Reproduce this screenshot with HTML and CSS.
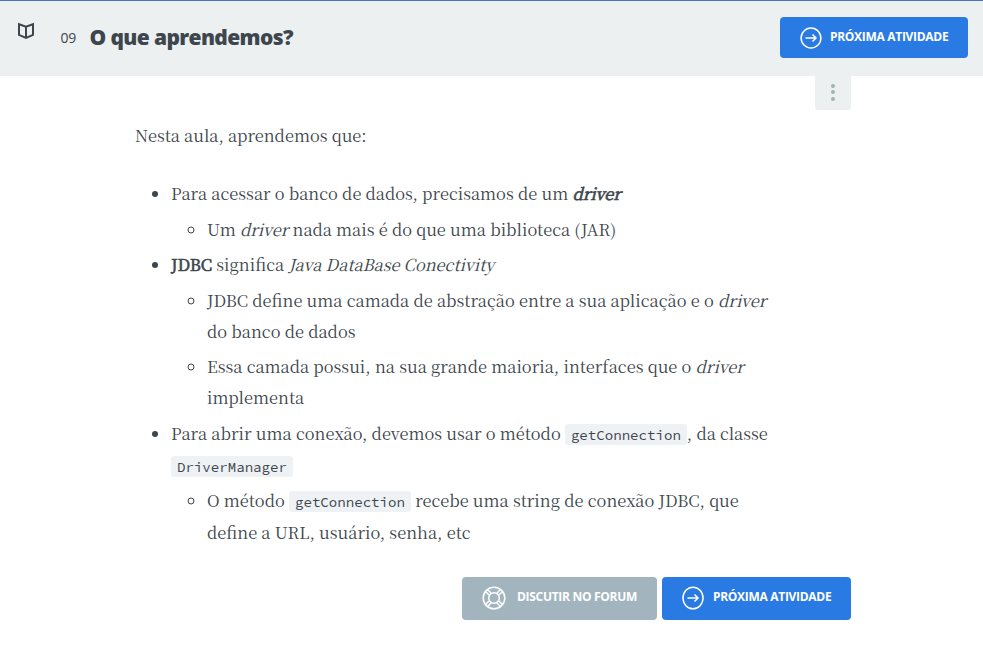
FILE: index.html
```html
<!DOCTYPE html>
<html lang="pt-BR">
<head>
<meta charset="utf-8">
<title>O que aprendemos?</title>
<link rel="stylesheet" href="styles.css">
</head>
<body>
<header class="topbar">
  <svg class="book" width="18" height="18" viewBox="0 0 18 18"><path d="M2 2.2 9 4.6 16 2.2V12.8L9 15.8 2 12.8ZM9 4.6V15.5"/></svg>
  <span class="number">09</span>
  <h1 class="title">O que aprendemos?</h1>
  <a class="button button-next"><svg class="icon" width="22" height="22" viewBox="0 0 22 22"><circle cx="11" cy="11" r="9.9"/><path d="M5.5 11H16M12.5 7.5 16 11 12.5 14.5"/></svg><span>PRÓXIMA ATIVIDADE</span></a>
</header>
<main class="content">
  <button class="menu" aria-label="Menu"><i></i><i></i><i></i></button>
  <p class="intro">Nesta aula, aprendemos que:</p>
  <ul class="list">
    <li>Para acessar o banco de dados, precisamos de um <strong><em>driver</em></strong>
      <ul><li>Um <em>driver</em> nada mais é do que uma biblioteca (JAR)</li></ul>
    </li>
    <li><strong>JDBC</strong> significa <em>Java DataBase Conectivity</em>
      <ul>
        <li>JDBC define uma camada de abstração entre a sua aplicação e o <em>driver</em><br>do banco de dados</li>
        <li>Essa camada possui, na sua grande maioria, interfaces que o <em>driver</em><br>implementa</li>
      </ul>
    </li>
    <li class="with-code">Para abrir uma conexão, devemos usar o método <code>getConnection</code>, da classe<br><code>DriverManager</code>
      <ul><li>O método <code>getConnection</code> recebe uma string de conexão JDBC, que<br>define a URL, usuário, senha, etc</li></ul>
    </li>
  </ul>
  <footer class="actions">
    <a class="button button-forum"><svg class="icon" width="24" height="24" viewBox="0 0 24 24"><circle cx="12" cy="12" r="10.8"/><circle cx="12" cy="12" r="5.3"/><path d="M7 9 3.5 5.5M9 7 5.5 3.5M15 7 18.5 3.5M17 9 20.5 5.5M17 15 20.5 18.5M15 17 18.5 20.5M9 17 5.5 20.5M7 15 3.5 18.5"/></svg><span>DISCUTIR NO FORUM</span></a>
    <a class="button button-next"><svg class="icon" width="22" height="24" viewBox="0 0 22 24"><ellipse cx="11" cy="12" rx="10" ry="10.8"/><path d="M5.5 12H16M12.5 8.5 16 12 12.5 15.5"/></svg><span>PRÓXIMA ATIVIDADE</span></a>
  </footer>
</main>
</body>
</html>
```
FILE: styles.css
```css
* { box-sizing: border-box; }
body { margin: 0; background: #fff; color: #3d464d; font-family: "Open Sans", sans-serif; }
.topbar { display: flex; align-items: flex-start; height: 76px; padding: 0 15px 0 17px; background: #ecf0f1; border-top: 1px solid #4673bd; }
.book { margin-top: 21px; fill: none; stroke: #3d464d; stroke-width: 2; }
.number { width: 29px; margin: 27px 0 0 25.5px; font-size: 14px; line-height: 20px; letter-spacing: -.3px; }
.title { margin: 21px auto 0 0; font-size: 21px; font-weight: 800; line-height: 30px; letter-spacing: -.62px; white-space: nowrap; }
.button { display: flex; align-items: center; height: 43px; border-radius: 4px; color: #fff; font-size: 12px; font-weight: 700; letter-spacing: -.3px; white-space: nowrap; }
.button span { line-height: 18px; margin-top: -3px; }
.icon { flex: none; fill: none; stroke: #fff; stroke-width: 1.5; }
.button-next { width: 189px; padding-left: 20px; gap: 9px; background: #2a7ae4; }
.button-forum { width: 195px; padding-left: 19.5px; gap: 11.5px; background: #a2b5bf; }
.topbar .button { width: 188px; height: 41px; margin-top: 16px; padding-left: 19.5px; gap: 8.5px; }
.topbar .button span { margin-top: -1px; }
.content { width: 716px; margin-left: 135px; font-family: "Source Serif Pro", "Noto Serif CJK SC", "Liberation Serif", serif; font-size: 16.46px; line-height: 31px; white-space: nowrap; }
.menu { display: flex; flex-direction: column; align-items: center; gap: 2px; width: 36px; height: 34px; margin-left: auto; padding: 8px 0 0; border: 0; border-radius: 0 0 3px 3px; background: #ecf0f1; }
.menu i { width: 4px; height: 4px; margin-bottom: .4px; border-radius: 50%; background: #a2b1b5; }
.intro { margin: 10px 0 22.4px; }
.list, .list ul { margin: 0; padding-left: 36px; }
.list li { padding-top: 4.6px; }
.list > li { list-style: disc; }
.list ul > li { list-style: circle; }
.list .with-code { line-height: 31.6px; padding-top: 4.6px; }
.with-code li { padding-top: 4px; }
strong { font-weight: 400; -webkit-text-stroke: .7px #3d464d; }
code { display: inline-block; height: 21px; padding: 0 6px; border-radius: 3px; background: #eff2f5; font: 14.1px/22px "Source Code Pro", "Noto Sans Mono CJK SC", "DejaVu Sans Mono", monospace; vertical-align: 0; margin-bottom: -1px; }
.actions { display: flex; justify-content: flex-end; gap: 5px; margin-top: 28.4px; font-family: "Open Sans", sans-serif; }
```
